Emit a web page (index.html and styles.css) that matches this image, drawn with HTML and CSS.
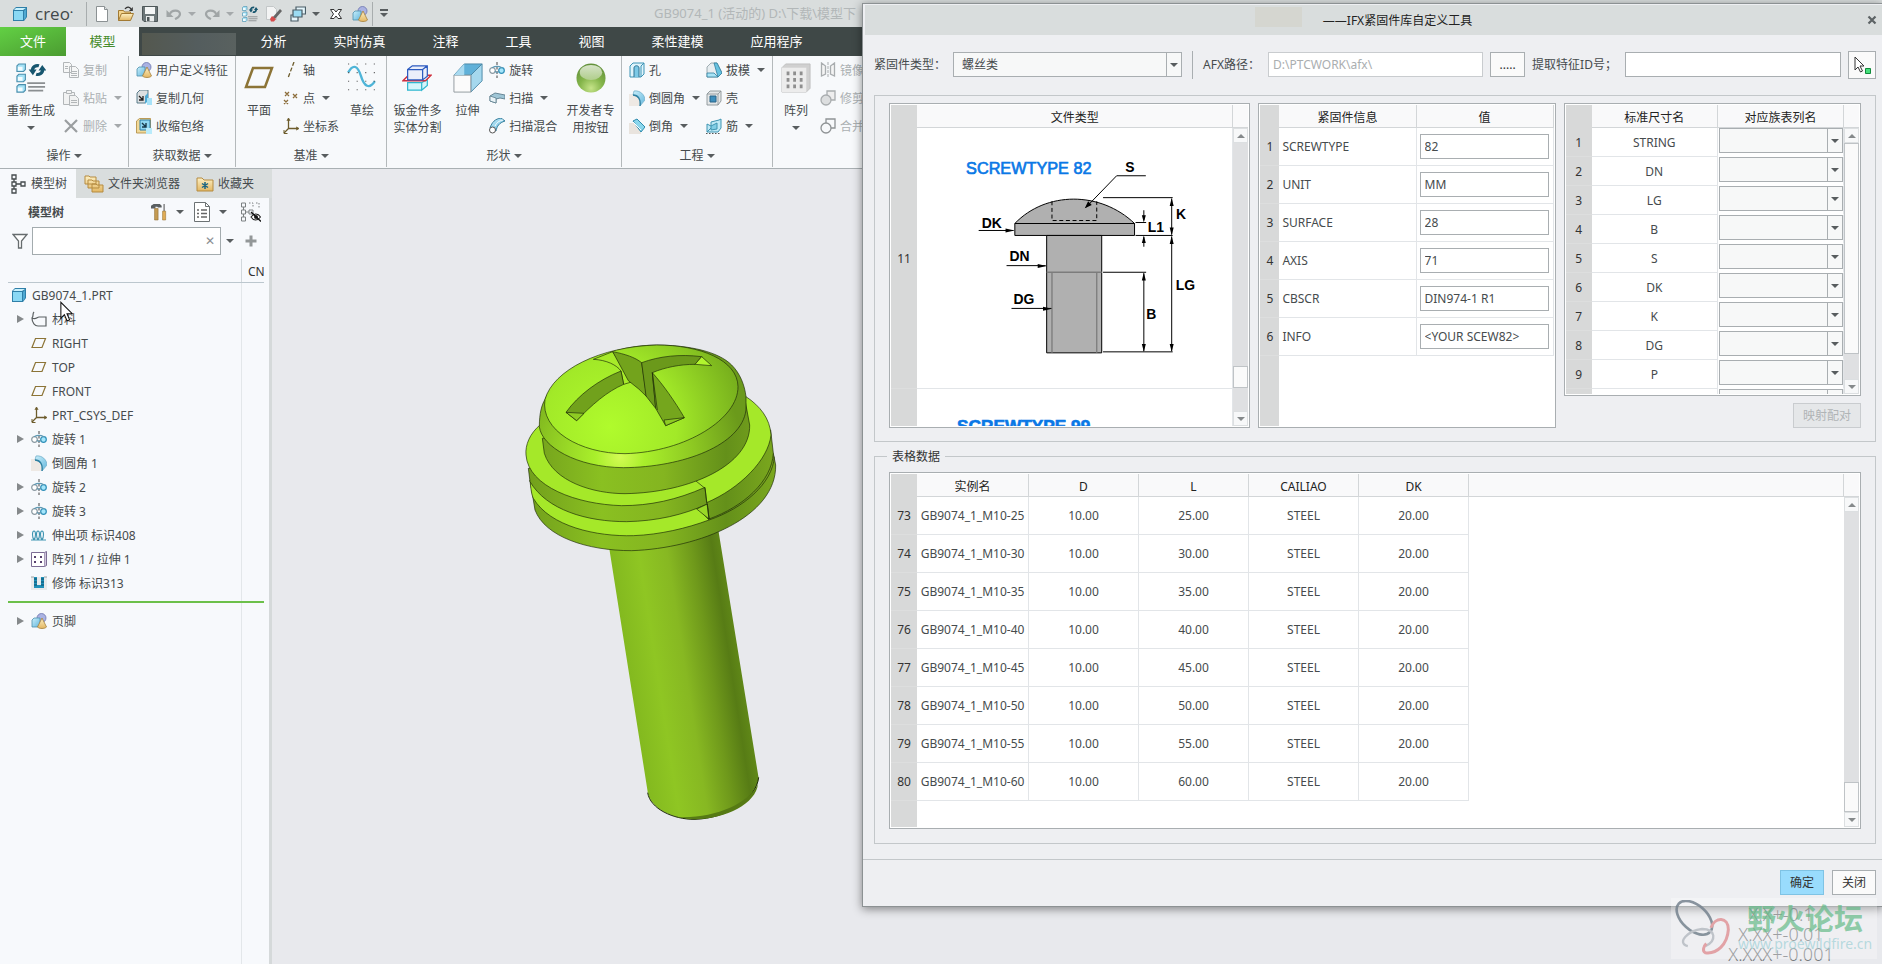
FILE: index.html
```html
<!DOCTYPE html>
<html lang="zh-CN">
<head>
    <meta charset="UTF-8">
    <meta name="viewport" content="width=device-width, initial-scale=1.0">
    <title>GB9074_1 - Creo</title>
    <link rel="stylesheet" href="styles.css">
</head>
<body>
    <!-- 图标库 -->
    <svg class="icon-defs" aria-hidden="true">
        <defs>
            <linearGradient id="g-blue" x1="0" y1="0" x2="1" y2="1"><stop offset="0" stop-color="#c9effb"/><stop offset="1" stop-color="#63b6dc"/></linearGradient>
            <linearGradient id="g-gold" x1="0" y1="0" x2="0" y2="1"><stop offset="0" stop-color="#fdf0c4"/><stop offset="1" stop-color="#e3b763"/></linearGradient>
            <radialGradient id="g-ball" cx=".5" cy=".85" r=".8"><stop offset="0" stop-color="#c6e489"/><stop offset=".5" stop-color="#84b54a"/><stop offset="1" stop-color="#64923c"/></radialGradient>
            <linearGradient id="g-gloss" x1="0" y1="0" x2="0" y2="1"><stop offset="0" stop-color="#f3f8ec"/><stop offset="1" stop-color="#b9d29b"/></linearGradient>
        </defs>
        <symbol id="i-cube" viewBox="0 0 16 16"><path d="M1 4l3-3h11v10l-3 4H1z" fill="#2f7fa8"/><path d="M2 5h9v9H2z" fill="#8ad8f4"/><path d="M2 4l2-2h10l-3 2z" fill="#c9f1fd"/><path d="M12 5l2-2v8l-2 3z" fill="#4fa9d2"/></symbol>
        <symbol id="i-new" viewBox="0 0 16 16"><path d="M2.500.5h8l3 3v12h-11z" fill="#fff" stroke="#8b9193"/><path d="M10.500.5v3h3" fill="#dfe3e4" stroke="#8b9193"/></symbol>
        <symbol id="i-open" viewBox="0 0 16 16"><path d="M.5 14.500v-10h5l1 1.500h6v3" fill="#f3d48e" stroke="#a27a33"/><path d="M.5 14.500l3-7h12l-3 7z" fill="url(#g-gold)" stroke="#a27a33"/><path d="M7 3c2-3 5-2 6 0" fill="none" stroke="#333" stroke-width="1.300"/><path d="M14.800 1v4h-4z" fill="#333"/></symbol>
        <symbol id="i-save" viewBox="0 0 16 16"><path d="M.5.5h15v15H2l-1.500-1.500z" fill="#6d7779" stroke="#4e5759"/><path d="M3 1h10v7H3z" fill="#f4f6f6"/><path d="M4 10h8v5.500H4z" fill="#e9ecec"/><path d="M5 11h2.500v4H5z" fill="#4e5759"/></symbol>
        <symbol id="i-undo" viewBox="0 0 16 16"><path d="M4 8c1-4 10-5 10 0 0 3-3 4-5 5" fill="none" stroke="#a0a5a6" stroke-width="2.200"/><path d="M.5 4v7h7z" fill="#a0a5a6"/></symbol>
        <symbol id="i-redo" viewBox="0 0 16 16"><path d="M12 8C11 4 2 3 2 8c0 3 3 4 5 5" fill="none" stroke="#a0a5a6" stroke-width="2.200"/><path d="M15.500 4v7h-7z" fill="#a0a5a6"/></symbol>
        <symbol id="i-regen" viewBox="0 0 32 32"><g fill="#a5e2f6" stroke="#4b8fad" stroke-width="1.200"><path d="M1 3l2-2h7v6l-2 2H1zM1 14l2-2h7v6l-2 2H1zM1 25l2-2h7v6l-2 2H1z"/></g><path d="M2 4h5v4H2zM2 15h5v4H2zM2 26h5v4H2z" fill="#f2fcff"/><path d="M12 21.500h19M13 25.500h18M13 29.500h16" stroke="#8b8f91" stroke-width="1.800"/><path d="M17.500 8c0-4 4-6 7-5M28.500 7c0 4-4 6-7 5" fill="none" stroke="#17566f" stroke-width="3.400"/><path d="M13.500 7h8.500l-4 6zM24 8h8.500l-4.500-6z" fill="#17566f"/></symbol>
        <symbol id="i-erase" viewBox="0 0 16 16"><path d="M.5.5h7l3 3v10h-10z" fill="#f3f4f4" stroke="#c3c7c8"/><path d="M14 3l2 2-7 8-3-1z" fill="#666"/><path d="M6 10l4 3-2 2.500H5L4 13z" fill="#d64b4b"/></symbol>
        <symbol id="i-windows" viewBox="0 0 16 16"><g fill="#e4f5fb" stroke="#4a5d66" stroke-width="1.200"><path d="M6 1h9.500v7H6z"/><path d="M1 9h7v6H1z"/><path d="M3 4h9v7H3z" fill="#9bdcf3"/></g></symbol>
        <symbol id="i-closewin" viewBox="0 0 16 16"><path d="M2.500 3.500h3.500l2 2.500 2-2.500h3.500L10.500 8l3 4.500H10L8 10l-2 2.500H2.500l3-4.500z" fill="#fff" stroke="#333"/></symbol>
        <symbol id="i-udf" viewBox="0 0 16 16"><circle cx="10.500" cy="5" r="4.500" fill="#aab2e2" stroke="#6c75ae" stroke-width=".8"/><path d="M1 7l2-2h6v6l-2 3H1z" fill="url(#g-blue)" stroke="#4b8fad" stroke-width=".8"/><path d="M11 5l4.500 9c-2 2-7 2-9 0z" fill="url(#g-gold)" stroke="#a5803b" stroke-width=".8"/></symbol>
        <symbol id="i-copy" viewBox="0 0 16 16"><g fill="#f6f7f7" stroke="#b2b6b8"><path d="M.5.500h6l2 2v8h-8zM6.500 4.500h6l3 3v8h-9z"/><path d="M8 9.500h6M8 11.500h6M8 13.500h6M2 4.500h3M2 6.500h3"/></g></symbol>
        <symbol id="i-paste" viewBox="0 0 16 16"><g fill="#f1f2f2" stroke="#b2b6b8"><path d="M.5 2.500h11v12H.5z"/><path d="M3.500.500h5v3h-5z"/><path d="M6.500 5.500h6l3 3v7h-9z"/><path d="M8 10.500h6M8 12.500h6"/></g></symbol>
        <symbol id="i-delete" viewBox="0 0 16 16"><path d="M2 2l12 12M14 2L2 14" stroke="#9a9ea0" stroke-width="2.200"/></symbol>
        <symbol id="i-copygeom" viewBox="0 0 16 16"><path d="M1 3l3-3h8v9l-3 4H1z" fill="#dcdfe0" stroke="#4b6f80" stroke-width=".9"/><path d="M3 6l4 4M7 6v4H3" stroke="#222" stroke-width="1.300" fill="none"/><path d="M9 6l3-3v8l-3 3z" fill="#4fa9d2"/><path d="M11 8h5v7h-5z" fill="#a7e2f8"/></symbol>
        <symbol id="i-shrink" viewBox="0 0 16 16"><path d="M.5 3l3-2.500h11v12L12 15H.5z" fill="#f1d998" stroke="#b6924a" stroke-width=".9"/><path d="M4 2h10v10H4z" fill="#8fd6f1" stroke="#2f7fa8"/><path d="M6 5l4 4M10 5v4H6" stroke="#17384a" stroke-width="1.400" fill="none"/><path d="M10 10h6v6h-6z" fill="#b9ebfb"/></symbol>
        <symbol id="i-plane" viewBox="0 0 30 24"><path d="M9 2h19l-7 19H2z" fill="none" stroke="#8c7436" stroke-width="2.500"/></symbol>
        <symbol id="i-axis" viewBox="0 0 16 16"><path d="M11 0L5 16" stroke="#6d5c2c" stroke-width="1.300" stroke-dasharray="4 2"/></symbol>
        <symbol id="i-point" viewBox="0 0 16 16"><path d="M2 2l4 4M6 2L2 6M10 4l4 4M14 4l-4 4M1 10l4 4M5 10l-4 4" stroke="#8c6d3a" stroke-width="1.300"/></symbol>
        <symbol id="i-csys" viewBox="0 0 16 16"><path d="M5.500 1v9.500H15M5.500 10.500L1 15" fill="none" stroke="#6d5c2c" stroke-width="1.300"/><path d="M4 3l1.500-3L7 3M13 9l3 1.500-3 1.500M1 12v3.500h3.500" fill="none" stroke="#6d5c2c"/></symbol>
        <symbol id="i-sketch" viewBox="0 0 28 28"><path d="M1 9C6 0 10 3 13 12c3 10 8 13 13 5" fill="none" stroke="#4fb5d8" stroke-width="2.200"/><path d="M1 1h27M1 9h27M1 17h27M1 25h27" stroke="#555" stroke-width="1" stroke-dasharray="1 7"/></symbol>
        <symbol id="i-sheet" viewBox="0 0 32 28"><path d="M6 19h15v8H6zM21 19l6-4v7l-6 5z" fill="#d6f5fb" stroke="#2fb7cf" stroke-width="1.300"/><path d="M1 17l6-6h24l-6 6z" fill="#fff" stroke="#d02f3c" stroke-width="1.500"/><path d="M6 5l5-4h16v11l-5 4H6zM6 5h16v11M22 5l5-4" fill="#eaeefa" stroke="#2c5bc0" stroke-width="1.300"/></symbol>
        <symbol id="i-extrude" viewBox="0 0 32 32"><path d="M1 13L12 1h19L19 13z" fill="#5fb0d8" stroke="#4a87a5"/><path d="M19 13L31 1v18L19 31z" fill="#a5d8ee" stroke="#4a87a5"/><path d="M1 13h18v18H1z" fill="#fbfbfb" stroke="#8f989c"/><path d="M12 1L1 13h11z" fill="#a9daf0"/></symbol>
        <symbol id="i-revolve" viewBox="0 0 16 16"><path d="M8 0v16" stroke="#444" stroke-dasharray="3 1.500"/><circle cx="3.500" cy="8.500" r="2.800" fill="#fff" stroke="#8b9aa2" stroke-width="1.200"/><circle cx="12.500" cy="8.500" r="2.800" fill="#a5e6fb" stroke="#2f8fb8" stroke-width="1.200"/><path d="M3 5.700c3-1.500 7-1.500 10 0M6 9c1 2 3 2 4 0" fill="none" stroke="#5f99b3" stroke-width="1.200"/></symbol>
        <symbol id="i-sweep" viewBox="0 0 16 16"><path d="M1 6l5-3 10 2v4l-5-1-4 1v4l-6-2z" fill="#9fc6d6" stroke="#5d7e8d" stroke-width=".9"/><path d="M1 6l6 2v5l-6-2z" fill="#e9f3f7" stroke="#5d7e8d" stroke-width=".8"/></symbol>
        <symbol id="i-blend" viewBox="0 0 16 16"><path d="M1 10c2-6 5-9 11-10l4 3c-6 2-8 5-9 10z" fill="url(#g-blue)" stroke="#39809e"/><circle cx="3.500" cy="12" r="3" fill="#fff" stroke="#555"/><path d="M6 8c2-4 4-5 8-6" fill="none" stroke="#fff"/></symbol>
        <symbol id="i-ball" viewBox="0 0 32 32"><circle cx="16" cy="16" r="15.500" fill="url(#g-ball)"/><ellipse cx="16" cy="10" rx="12" ry="8" fill="url(#g-gloss)" opacity=".8"/></symbol>
        <symbol id="i-hole" viewBox="0 0 16 16"><path d="M1 4l3-3h11v11l-3 3H1z" fill="#dff4fb" stroke="#3b93b5"/><path d="M5 15V6c0-3 5-3 5 0v9" fill="#7cc9e6" stroke="#2d7393"/><path d="M12 4v11M12 4l3-3" stroke="#3b93b5"/></symbol>
        <symbol id="i-round" viewBox="0 0 16 16"><path d="M0 4h6c5 1 6 5 6 8l-2 4H0z" fill="#eee9e4"/><path d="M5 1c6-1 11 4 11 9l-5 6c1-5-1-10-7-11z" fill="url(#g-blue)" stroke="#78b3cb" stroke-width=".8"/><path d="M4 5c5 0 8 4 7 11" fill="none" stroke="#2e7fa0" stroke-width="1.300"/></symbol>
        <symbol id="i-chamfer" viewBox="0 0 16 16"><path d="M0 5h6l6 6v5H0z" fill="#e9e4de"/><path d="M4 3l4-2 8 8-4 5z" fill="#8ad6ec" stroke="#2e8aac"/><path d="M4 4l8 8" stroke="#fff"/></symbol>
        <symbol id="i-draft" viewBox="0 0 16 16"><path d="M1 5l4-4h6l5 10-4 4H1z" fill="#e7edf0" stroke="#8a999f" stroke-width=".8"/><path d="M8 1l3 0 5 10-4 4z" fill="#67c2e0" stroke="#2f7fa0" stroke-width=".8"/><path d="M1 11h7l4 4H1z" fill="#a9e4f6" stroke="#2f7fa0" stroke-width=".8"/></symbol>
        <symbol id="i-shell" viewBox="0 0 16 16"><path d="M1 4l3-3h11v10l-3 4H1z" fill="#e4e7e8" stroke="#8a9396" stroke-width=".9"/><path d="M1 4h11v11M12 4l3-3" fill="none" stroke="#8a9396" stroke-width=".8"/><path d="M4 6h6v6H4z" fill="#3e8fbd" stroke="#2a6588"/></symbol>
        <symbol id="i-rib" viewBox="0 0 16 16"><path d="M1 6l4 2V4l8-2 2-1v9l-3 4H1z" fill="#bfe9f6" stroke="#3f95b2"/><path d="M5 8l6-3v6l-6 1zM1 14l4-4" fill="#80cde5" stroke="#3f95b2"/><path d="M0 15.500h15" stroke="#555" stroke-dasharray="1.500 1.500"/></symbol>
        <symbol id="i-pattern" viewBox="0 0 32 32"><path d="M1 5l4-4h26v26l-4 4H1z" fill="#d0d0d0" stroke="#c0c0c0"/><path d="M1 5h26v26H1z" fill="#ececec"/><g fill="#8f8f8f"><path d="M6 9h3v4H6zM13 9h3v4h-3zM20 9h3v4h-3zM6 16h3v4H6zM13 16h3v4h-3zM20 16h3v4h-3zM6 23h3v4H6zM13 23h3v4h-3zM20 23h3v4h-3z"/></g></symbol>
        <symbol id="i-mirror" viewBox="0 0 16 16"><path d="M1.500 1v13l4-2V4zM14.500 1v13l-4-2V4z" fill="#f4f4f4" stroke="#a9adaf" stroke-width="1.300"/><path d="M8 0v16" stroke="#a9adaf" stroke-dasharray="3 1"/></symbol>
        <symbol id="i-trim" viewBox="0 0 16 16"><path d="M7 1h8v9H7z" fill="#eee" stroke="#a9adaf" stroke-width="1.300"/><circle cx="6" cy="10" r="5" fill="#dcdedf" stroke="#a9adaf" stroke-width="1.300"/></symbol>
        <symbol id="i-merge" viewBox="0 0 16 16"><path d="M6 5V1h9v9h-4" fill="none" stroke="#8f9395" stroke-width="1.300"/><circle cx="6" cy="10" r="5" fill="none" stroke="#8f9395" stroke-width="1.300"/></symbol>
        <symbol id="i-tree" viewBox="0 0 16 20"><g fill="none" stroke="#454b4d" stroke-width="1.300"><path d="M2 1h4v4H2zM2 8h4v4H2zM2 15h4v4H2zM11 8h4v4h-4zM4 5v3M4 12v3M6 10h5"/></g></symbol>
        <symbol id="i-folders" viewBox="0 0 20 20"><g fill="url(#g-gold)" stroke="#b58b41"><path d="M1 10V2h4l1 1h6v7zM4 14V6h4l1 1h6v7zM8 18v-8h4l1 1h6v7z"/></g></symbol>
        <symbol id="i-fav" viewBox="0 0 18 16"><path d="M1 15V2h5l2 2h9v11z" fill="url(#g-gold)" stroke="#b58b41"/><path d="M9 6v7M6 7.500l6 4M12 7.500l-6 4" stroke="#1a6583" stroke-width="1.500"/></symbol>
        <symbol id="i-tools" viewBox="0 0 18 20"><path d="M0 3l3-2h7l2 2v2H8L7 4H5v2H0z" fill="#5a5f61"/><path d="M4 6h4v13H4z" fill="#c59b52" stroke="#8b6a30" stroke-width=".6"/><path d="M14 1h1.500v9H14z" fill="#777"/><path d="M13 9h3.500v10H13z" fill="#e1ad55" stroke="#94702f" stroke-width=".6"/></symbol>
        <symbol id="i-list" viewBox="0 0 16 20"><path d="M.5.5h11l4 4v15H.5z" fill="#fff" stroke="#6c7274"/><path d="M11.500.5v4h4" fill="none" stroke="#6c7274"/><path d="M3 8h2M3 11.500h2M3 15h2M7 8h6M7 11.500h6M7 15h6" stroke="#666" stroke-width="1.300"/></symbol>
        <symbol id="i-treeeye" viewBox="0 0 20 20"><g fill="none" stroke="#7c8183"><path d="M.5 1h4v4h-4zM.5 8h4v4h-4zM.5 15h4v4h-4zM8 8h4v4H8zM2.500 5v3M2.500 12v3M4.500 10H8"/><path d="M8 1h4v4M15 1h3v5" stroke-dasharray="1.500 1.500"/></g><path d="M10 15c3-4 7-4 9.500 0-3 4-7 4-9.500 0z" fill="#fff" stroke="#222" stroke-width="1.100"/><circle cx="15" cy="15" r="2" fill="#222"/><path d="M10 10l10 9.500" stroke="#111" stroke-width="1.300"/></symbol>
        <symbol id="i-funnel" viewBox="0 0 16 16"><path d="M1 1.500h14L9.500 8v7h-3V8z" fill="#fff" stroke="#666c6e" stroke-width="1.300"/></symbol>
        <symbol id="i-plus" viewBox="0 0 12 12"><path d="M6 .5v11M.5 6h11" stroke="#939798" stroke-width="3"/></symbol>
        <symbol id="i-material" viewBox="0 0 16 16"><path d="M3 1C1 3 3 5 1 7c0 5 3 8 6 8h8V6H8c-2 0-3 3-7 1" fill="none" stroke="#5b6062" stroke-width="1.200"/></symbol>
        <symbol id="i-datum" viewBox="0 0 16 16"><path d="M4.500 3.500h10l-3.500 9H1z" fill="none" stroke="#8c7436" stroke-width="1.200"/></symbol>
        <symbol id="i-helix" viewBox="0 0 16 16"><g fill="none" stroke="#3f95b2" stroke-width="1.100"><path d="M0 13h3c2-3 2-9 0-9s-2 6 0 9h4c2-3 2-9 0-9s-2 6 0 9h4c2-3 2-9 0-9s-2 6 0 9h4"/></g></symbol>
        <symbol id="i-parr" viewBox="0 0 16 16"><path d="M.5 1.500h13v14H.5z" fill="#fff" stroke="#7c6c94"/><path d="M13.500 1.500L15.500.5v14l-2 1" fill="#cfc6dc" stroke="#7c6c94"/><path d="M3 5h2v2H3zM9 5h2v2H9zM3 10h2v2H3zM9 10h2v2H9z" fill="#57406f"/></symbol>
        <symbol id="i-thread" viewBox="0 0 16 16"><path d="M0 2h16v13H0z" fill="#e8eaeb"/><path d="M0 2h3M13 2h3" stroke="#9aa3a7"/><path d="M3 2v11h10V2h-3v8H6V2z" fill="#2090b8"/><path d="M3 4h3M3 7h3M3 10h3M10 4h3M10 7h3M10 10h3" stroke="#0b516e"/></symbol>
        <symbol id="i-pointer" viewBox="0 0 16 24"><path d="M1 1v18l4-4 3 7 3-1-3-7h6z" fill="#fff" stroke="#111" stroke-width="1.200"/></symbol>
        <symbol id="i-pick" viewBox="0 0 18 18"><path d="M2 1v13l3-3 2.500 5 2-1L7 10h4z" fill="#fff" stroke="#333"/><path d="M12.500 12.500h5v5h-5z" fill="#45e07b" stroke="#118a3c"/></symbol>
    </svg>

    <div class="app">
        <header class="titlebar">
            <svg class="ic"><use href="#i-cube"/></svg>
            <span class="brand">creo<sup>•</sup></span>
            <div class="quick">
                <button aria-label="新建"><svg class="ic"><use href="#i-new"/></svg></button>
                <button aria-label="打开"><svg class="ic"><use href="#i-open"/></svg></button>
                <button aria-label="保存"><svg class="ic"><use href="#i-save"/></svg></button>
                <button aria-label="撤消" class="off"><svg class="ic"><use href="#i-undo"/></svg><i class="caret"></i></button>
                <button aria-label="重做" class="off"><svg class="ic"><use href="#i-redo"/></svg><i class="caret"></i></button>
                <button aria-label="重新生成"><svg class="ic"><use href="#i-regen"/></svg></button>
                <button aria-label="拭除"><svg class="ic"><use href="#i-erase"/></svg></button>
                <button aria-label="窗口"><svg class="ic"><use href="#i-windows"/></svg><i class="caret"></i></button>
                <button aria-label="关闭窗口"><svg class="ic"><use href="#i-closewin"/></svg></button>
                <button aria-label="用户定义特征"><svg class="ic"><use href="#i-udf"/></svg></button>
            </div>
            <button class="customize" aria-label="自定义"><i class="caret"></i></button>
            <span class="doc-title">GB9074_1 (活动的) D:\下载\模型下</span>
        </header>

        <nav class="tabs">
            <button class="tab file">文件</button>
            <button class="tab active">模型</button>
            <span class="tab-blank"></span>
            <button class="tab">分析</button>
            <button class="tab wide">实时仿真</button>
            <button class="tab">注释</button>
            <button class="tab">工具</button>
            <button class="tab">视图</button>
            <button class="tab wide">柔性建模</button>
            <button class="tab wide">应用程序</button>
        </nav>

        <div class="ribbon">
            <section class="group g-ops">
                <div class="group-body">
                    <button class="big"><svg><use href="#i-regen"/></svg>重新生成<i class="caret"></i></button>
                    <div class="col">
                        <button class="cmd off"><svg class="ic"><use href="#i-copy"/></svg>复制</button>
                        <button class="cmd off"><svg class="ic"><use href="#i-paste"/></svg>粘贴<i class="caret"></i></button>
                        <button class="cmd off"><svg class="ic"><use href="#i-delete"/></svg>删除<i class="caret"></i></button>
                    </div>
                </div>
                <button class="group-title">操作<i class="caret"></i></button>
            </section>
            <section class="group g-data">
                <div class="group-body">
                    <div class="col">
                        <button class="cmd"><svg class="ic"><use href="#i-udf"/></svg>用户定义特征</button>
                        <button class="cmd"><svg class="ic"><use href="#i-copygeom"/></svg>复制几何</button>
                        <button class="cmd"><svg class="ic"><use href="#i-shrink"/></svg>收缩包络</button>
                    </div>
                </div>
                <button class="group-title">获取数据<i class="caret"></i></button>
            </section>
            <section class="group g-datum">
                <div class="group-body">
                    <button class="big"><svg><use href="#i-plane"/></svg>平面</button>
                    <div class="col">
                        <button class="cmd"><svg class="ic"><use href="#i-axis"/></svg>轴</button>
                        <button class="cmd"><svg class="ic"><use href="#i-point"/></svg>点<i class="caret"></i></button>
                        <button class="cmd"><svg class="ic"><use href="#i-csys"/></svg>坐标系</button>
                    </div>
                    <button class="big"><svg><use href="#i-sketch"/></svg>草绘</button>
                </div>
                <button class="group-title">基准<i class="caret"></i></button>
            </section>
            <section class="group g-shape">
                <div class="group-body">
                    <button class="big"><svg><use href="#i-sheet"/></svg>钣金件多<br>实体分割</button>
                    <button class="big narrow"><svg><use href="#i-extrude"/></svg>拉伸</button>
                    <div class="col">
                        <button class="cmd"><svg class="ic"><use href="#i-revolve"/></svg>旋转</button>
                        <button class="cmd"><svg class="ic"><use href="#i-sweep"/></svg>扫描<i class="caret"></i></button>
                        <button class="cmd"><svg class="ic"><use href="#i-blend"/></svg>扫描混合</button>
                    </div>
                    <button class="big"><svg><use href="#i-ball"/></svg>开发者专<br>用按钮</button>
                </div>
                <button class="group-title">形状<i class="caret"></i></button>
            </section>
            <section class="group g-eng">
                <div class="group-body">
                    <div class="col">
                        <button class="cmd"><svg class="ic"><use href="#i-hole"/></svg>孔</button>
                        <button class="cmd"><svg class="ic"><use href="#i-round"/></svg>倒圆角<i class="caret"></i></button>
                        <button class="cmd"><svg class="ic"><use href="#i-chamfer"/></svg>倒角<i class="caret"></i></button>
                    </div>
                    <div class="col">
                        <button class="cmd"><svg class="ic"><use href="#i-draft"/></svg>拔模<i class="caret"></i></button>
                        <button class="cmd"><svg class="ic"><use href="#i-shell"/></svg>壳</button>
                        <button class="cmd"><svg class="ic"><use href="#i-rib"/></svg>筋<i class="caret"></i></button>
                    </div>
                </div>
                <button class="group-title">工程<i class="caret"></i></button>
            </section>
            <section class="group g-edit">
                <div class="group-body">
                    <button class="big narrow"><svg><use href="#i-pattern"/></svg>阵列<i class="caret"></i></button>
                    <div class="col">
                        <button class="cmd off"><svg class="ic"><use href="#i-mirror"/></svg>镜像</button>
                        <button class="cmd off"><svg class="ic"><use href="#i-trim"/></svg>修剪</button>
                        <button class="cmd off"><svg class="ic"><use href="#i-merge"/></svg>合并</button>
                    </div>
                </div>
            </section>
        </div>

        <div class="workspace">
            <aside class="sidebar">
                <div class="side-tabs">
                    <button class="side-tab current"><svg class="ic-tree"><use href="#i-tree"/></svg>模型树</button>
                    <button class="side-tab"><svg class="ic-tree wide"><use href="#i-folders"/></svg>文件夹浏览器</button>
                    <button class="side-tab"><svg class="ic"><use href="#i-fav"/></svg>收藏夹</button>
                </div>
                <div class="side-head">
                    <h2>模型树</h2>
                    <button class="set" aria-label="设置"><svg class="ic-tree"><use href="#i-tools"/></svg><i class="caret"></i></button>
                    <button aria-label="显示"><svg class="ic-tree"><use href="#i-list"/></svg><i class="caret"></i></button>
                    <button aria-label="隐藏"><svg class="ic-tree wide"><use href="#i-treeeye"/></svg></button>
                </div>
                <div class="filter">
                    <svg class="ic"><use href="#i-funnel"/></svg>
                    <div class="filter-box">
                        <input type="text" aria-label="过滤">
                        <button aria-label="清除">✕</button>
                    </div>
                    <i class="caret"></i>
                    <button aria-label="添加"><svg class="ic-plus"><use href="#i-plus"/></svg></button>
                </div>
                <div class="tree-head"><span></span><span class="tree-cn">CN</span></div>
                <div class="tree">
                    <ul>
                        <li class="root"><svg class="ic"><use href="#i-cube"/></svg>GB9074_1.PRT</li>
                        <li class="has"><svg class="ic"><use href="#i-material"/></svg>材料</li>
                        <li><svg class="ic"><use href="#i-datum"/></svg>RIGHT</li>
                        <li><svg class="ic"><use href="#i-datum"/></svg>TOP</li>
                        <li><svg class="ic"><use href="#i-datum"/></svg>FRONT</li>
                        <li><svg class="ic"><use href="#i-csys"/></svg>PRT_CSYS_DEF</li>
                        <li class="has"><svg class="ic"><use href="#i-revolve"/></svg>旋转 1</li>
                        <li><svg class="ic"><use href="#i-round"/></svg>倒圆角 1</li>
                        <li class="has"><svg class="ic"><use href="#i-revolve"/></svg>旋转 2</li>
                        <li class="has"><svg class="ic"><use href="#i-revolve"/></svg>旋转 3</li>
                        <li class="has"><svg class="ic"><use href="#i-helix"/></svg>伸出项 标识408</li>
                        <li class="has"><svg class="ic"><use href="#i-parr"/></svg>阵列 1 / 拉伸 1</li>
                        <li><svg class="ic"><use href="#i-thread"/></svg>修饰 标识313</li>
                    </ul>
                    <hr>
                    <ul>
                        <li class="has"><svg class="ic"><use href="#i-udf"/></svg>页脚</li>
                    </ul>
                </div>
                <svg class="pointer"><use href="#i-pointer"/></svg>
            </aside>

            <main class="canvas">
                <!-- 螺钉模型 -->
                <svg class="screw" viewBox="0 0 870 1500" role="img" aria-label="GB9074_1 螺钉">
                    <defs>
                        <linearGradient id="s-shaft" gradientUnits="userSpaceOnUse" x1="355" y1="1020" x2="690" y2="968">
                            <stop offset="0" stop-color="#83b91f"/><stop offset=".25" stop-color="#8fc623"/><stop offset=".5" stop-color="#87b822"/><stop offset=".72" stop-color="#6f991b"/><stop offset=".9" stop-color="#577c15"/><stop offset="1" stop-color="#618918"/>
                        </linearGradient>
                        <linearGradient id="s-side" gradientUnits="userSpaceOnUse" x1="50" y1="0" x2="798" y2="0">
                            <stop offset="0" stop-color="#729f1c"/><stop offset=".3" stop-color="#8ac021"/><stop offset=".55" stop-color="#84b520"/><stop offset=".8" stop-color="#64901a"/><stop offset="1" stop-color="#7ba81e"/>
                        </linearGradient>
                        <radialGradient id="s-dome" gradientUnits="userSpaceOnUse" cx="300" cy="290" r="400">
                            <stop offset="0" stop-color="#b0fb2c"/><stop offset=".5" stop-color="#a2e928"/><stop offset="1" stop-color="#78b01d"/>
                        </radialGradient>
                        <radialGradient id="s-rim" gradientUnits="userSpaceOnUse" cx="330" cy="380" r="370">
                            <stop offset="0" stop-color="#d3fb54"/><stop offset=".2" stop-color="#a9ef2b"/><stop offset=".6" stop-color="#8dc822"/><stop offset="1" stop-color="#6b9a1b"/>
                        </radialGradient>
                    </defs>
                    <g stroke="#1d2a08" stroke-width="2" stroke-linejoin="round">
                        <path d="M297 650L413 1385C420 1435 490 1468 555 1468C650 1465 738 1410 746 1345L625 600Z" fill="url(#s-shaft)" stroke="none"/>
                        <path d="M413 1388C420 1436 490 1469 555 1468C650 1465 738 1410 746 1342" fill="none" stroke-width="3"/>
                        <path d="M490 1460C600 1470 715 1425 744 1362C738 1420 650 1466 555 1468Z" fill="#567a14" stroke="none"/>
                        <path d="M60 450L75 540C105 620 230 662 365 662C570 655 800 560 797 405L790 370Z" fill="url(#s-side)"/>
                        <path d="M60 450C62 475 65 495 70 505C120 590 260 620 370 617C450 614 530 595 597 570L560 530L340 560Z" fill="#a5e829"/>
                        <path d="M55 415L60 455C110 540 230 575 350 575C440 573 520 555 592 522L597 567C700 530 785 455 790 370L782 300Z" fill="url(#s-side)"/>
                        <path d="M597 570C700 535 788 460 793 380" fill="none"/>
                        <path d="M560 537L597 567L592 522Z" fill="#99d927"/>
                        <path d="M48 375C45 345 60 310 90 285L708 200C750 228 780 265 783 315C775 390 690 475 590 518L585 472C500 510 420 527 335 527C200 523 55 470 48 375Z" fill="#a5e829"/>
                        <path d="M558 453L585 475L597 567" fill="none"/>
                        <path d="M97 325L103 370C130 455 250 491 345 491C540 488 722 405 719 285L706 215Z" fill="url(#s-side)"/>
                        <path d="M88 290C88 250 95 225 105 208C125 160 180 115 250 88C320 55 380 46 440 45C540 46 625 65 665 105C690 130 704 165 708 200L708 240C695 345 520 412 340 413C200 412 95 350 88 290Z" fill="url(#s-rim)"/>
                        <path d="M105 208C90 300 210 371 345 371C530 366 685 265 684 170C683 90 570 45 440 45C270 50 130 120 105 208Z" fill="url(#s-dome)"/>
                        <path d="M250 88C290 90 320 105 333 123L341 163L368 155L308 65Z" fill="#a7eb29"/>
                        <path d="M168 247C205 195 265 150 333 123L341 163C290 185 245 225 200 272Z" fill="#71a11c"/>
                        <path d="M168 247L222 250L200 272Z" fill="#8ecb23"/>
                        <path d="M308 65C345 72 375 82 395 98L410 200Q390 178 355 152Z" fill="#73a31c"/>
                        <path d="M395 98C450 78 510 72 575 80L555 103C510 103 465 112 427 128L437 235L408 198Z" fill="#6b991b"/>
                        <path d="M575 80L605 107L555 103Z" fill="#b1f52e"/>
                        <path d="M427 128C460 165 495 215 523 263L467 287L437 235Z" fill="#75a61d"/>
                        <path d="M462 270L523 263L467 287Z" fill="#8ecb23"/>
                        <path d="M427 128L442 240" fill="none"/>
                    </g>
                </svg>
                <div class="tolerance">
                    <span>X.X+-0.1</span>
                    <span>X.XX+-0.01</span>
                    <span>X.XXX+-0.001</span>
                </div>
            </main>
        </div>

        <div class="dialog" role="dialog" aria-labelledby="dlg-title">
            <div class="dlg-bar">
                <span class="dlg-blank"></span>
                <h1 id="dlg-title">——IFX紧固件库自定义工具</h1>
                <button class="dlg-close" aria-label="关闭窗口"><svg viewBox="0 0 10 10"><path d="M1.500 1.500l7 7M8.500 1.500l-7 7" stroke="#5d6365" stroke-width="2.200"/></svg></button>
            </div>
            <div class="dlg-form">
                <label for="kind">紧固件类型：</label>
                <span class="combo kind"><select id="kind"><option>螺丝类</option></select></span>
                <span class="rule"></span>
                <label for="afx">AFX路径：</label>
                <input id="afx" class="afx" type="text" value="D:\PTCWORK\afx\" disabled>
                <button class="btn dots">.....</button>
                <label for="fid">提取特征ID号；</label>
                <input id="fid" class="fid" type="text">
                <button class="btn pick" aria-label="选取"><svg><use href="#i-pick"/></svg></button>
            </div>

            <div class="box top-box">
                <div class="grid-frame">
                    <div class="grid-view">
                        <table class="t-type">
                            <thead><tr><th class="no"></th><th>文件类型</th></tr></thead>
                            <tbody>
                                <tr>
                                    <td class="no">11</td>
                                    <td class="pic">
                                        <svg viewBox="111 84 951 780" role="img" aria-label="SCREWTYPE 82">
                                            <text class="d-title" x="259" y="222">SCREWTYPE 82</text>
                                            <path d="M406 370C500 272 665 272 767 370Z" fill="#b0b0b0" stroke="#000" stroke-width="3"/>
                                            <path d="M406 370h361v36H406z" fill="#b0b0b0" stroke="#000" stroke-width="3"/>
                                            <path d="M502 406h166v354H502z" fill="#b0b0b0" stroke="#000" stroke-width="3"/>
                                            <path d="M502 517h166M518 760V519M653 760V519" fill="none" stroke="#7c7c7c" stroke-width="4"/>
                                            <path d="M518 303v58h135v-58" fill="none" stroke="#000" stroke-width="3" stroke-dasharray="12 8"/>
                                            <path d="M801 226h-88L620 322M672 292h210M770 367h32M770 406h112M672 517h130M672 757h210M879 295v108M879 409v346M795 330v30M795 410v30M795 520v235M297 391h105M381 497h118M396 626h120" fill="none" stroke="#000" stroke-width="3"/>
                                            <path d="M617 324l10-21 11 11zM879 293l-6 24h12zM879 406l-6-24h12zM879 408l-6 24h12zM879 757l-6-24h12zM795 518l-6 24h12zM795 757l-6-24h12zM795 367l-6-22h12zM795 407l-6 22h12zM405 391l-27-6v12zM502 498l-27-6v12zM518 627l-27-6v12z"/>
                                            <g class="d-label">
                                                <text x="739" y="215">S</text><text x="306" y="384">DK</text><text x="807" y="396">L1</text>
                                                <text x="892" y="357">K</text><text x="390" y="483">DN</text><text x="402" y="612">DG</text>
                                                <text x="802" y="657">B</text><text x="891" y="570">LG</text>
                                            </g>
                                        </svg>
                                    </td>
                                </tr>
                                <tr>
                                    <td class="no"></td>
                                    <td class="pic next"><svg viewBox="111 867 951 780" role="img" aria-label="SCREWTYPE 99"><text class="d-title heavy" x="232" y="994">SCREWTYPE 99</text></svg></td>
                                </tr>
                            </tbody>
                        </table>
                    </div>
                    <div class="scroll"><b></b><button aria-label="向上"><i class="caret up"></i></button><div class="track"><span class="thumb at-type"></span></div><button aria-label="向下"><i class="caret"></i></button></div>
                </div>

                <div class="grid-frame">
                    <div class="grid-view">
                        <table class="t-info">
                            <thead><tr><th class="no"></th><th>紧固件信息</th><th>值</th></tr></thead>
                            <tbody>
                                <tr><td class="no">1</td><td><label for="v1">SCREWTYPE</label></td><td><input id="v1" type="text" value="82"></td></tr>
                                <tr><td class="no">2</td><td><label for="v2">UNIT</label></td><td><input id="v2" type="text" value="MM"></td></tr>
                                <tr><td class="no">3</td><td><label for="v3">SURFACE</label></td><td><input id="v3" type="text" value="28"></td></tr>
                                <tr><td class="no">4</td><td><label for="v4">AXIS</label></td><td><input id="v4" type="text" value="71"></td></tr>
                                <tr><td class="no">5</td><td><label for="v5">CBSCR</label></td><td><input id="v5" type="text" value="DIN974-1 R1"></td></tr>
                                <tr><td class="no">6</td><td><label for="v6">INFO</label></td><td><input id="v6" type="text" value="&lt;YOUR SCEW82&gt;"></td></tr>
                            </tbody>
                        </table>
                    </div>
                </div>

                <div class="map-col">
                    <div class="grid-frame">
                        <div class="grid-view">
                            <table class="t-map">
                                <thead><tr><th class="no"></th><th>标准尺寸名</th><th>对应族表列名</th></tr></thead>
                                <tbody>
                                    <tr><td class="no">1</td><td>STRING</td><td><span class="combo"><select aria-label="STRING"></select></span></td></tr>
                                    <tr><td class="no">2</td><td>DN</td><td><span class="combo"><select aria-label="DN"></select></span></td></tr>
                                    <tr><td class="no">3</td><td>LG</td><td><span class="combo"><select aria-label="LG"></select></span></td></tr>
                                    <tr><td class="no">4</td><td>B</td><td><span class="combo"><select aria-label="B"></select></span></td></tr>
                                    <tr><td class="no">5</td><td>S</td><td><span class="combo"><select aria-label="S"></select></span></td></tr>
                                    <tr><td class="no">6</td><td>DK</td><td><span class="combo"><select aria-label="DK"></select></span></td></tr>
                                    <tr><td class="no">7</td><td>K</td><td><span class="combo"><select aria-label="K"></select></span></td></tr>
                                    <tr><td class="no">8</td><td>DG</td><td><span class="combo"><select aria-label="DG"></select></span></td></tr>
                                    <tr><td class="no">9</td><td>P</td><td><span class="combo"><select aria-label="P"></select></span></td></tr>
                                    <tr><td class="no"></td><td></td><td><span class="combo"><select aria-label="10"></select></span></td></tr>
                                </tbody>
                            </table>
                        </div>
                        <div class="scroll"><b></b><button aria-label="向上"><i class="caret up"></i></button><div class="track"><span class="thumb at-map"></span></div><button aria-label="向下"><i class="caret"></i></button></div>
                    </div>
                    <button class="btn map-btn" disabled>映射配对</button>
                </div>
            </div>

            <fieldset class="box data-box">
                <legend>表格数据</legend>
                <div class="grid-frame">
                    <div class="grid-view">
                        <table class="t-data">
                            <thead><tr><th class="no"></th><th class="name">实例名</th><th>D</th><th>L</th><th>CAILIAO</th><th>DK</th><th class="rest"></th></tr></thead>
                            <tbody>
                                <tr><td class="no">73</td><td>GB9074_1_M10-25</td><td>10.00</td><td>25.00</td><td>STEEL</td><td>20.00</td></tr>
                                <tr><td class="no">74</td><td>GB9074_1_M10-30</td><td>10.00</td><td>30.00</td><td>STEEL</td><td>20.00</td></tr>
                                <tr><td class="no">75</td><td>GB9074_1_M10-35</td><td>10.00</td><td>35.00</td><td>STEEL</td><td>20.00</td></tr>
                                <tr><td class="no">76</td><td>GB9074_1_M10-40</td><td>10.00</td><td>40.00</td><td>STEEL</td><td>20.00</td></tr>
                                <tr><td class="no">77</td><td>GB9074_1_M10-45</td><td>10.00</td><td>45.00</td><td>STEEL</td><td>20.00</td></tr>
                                <tr><td class="no">78</td><td>GB9074_1_M10-50</td><td>10.00</td><td>50.00</td><td>STEEL</td><td>20.00</td></tr>
                                <tr><td class="no">79</td><td>GB9074_1_M10-55</td><td>10.00</td><td>55.00</td><td>STEEL</td><td>20.00</td></tr>
                                <tr><td class="no">80</td><td>GB9074_1_M10-60</td><td>10.00</td><td>60.00</td><td>STEEL</td><td>20.00</td></tr>
                            </tbody>
                        </table>
                    </div>
                    <div class="scroll"><b></b><button aria-label="向上"><i class="caret up"></i></button><div class="track"><span class="thumb at-data"></span></div><button aria-label="向下"><i class="caret"></i></button></div>
                </div>
            </fieldset>

            <div class="dlg-foot">
                <button class="btn ok">确定</button>
                <button class="btn">关闭</button>
            </div>
        </div>

        <!-- 水印 -->
        <div class="watermark">
            <svg viewBox="0 0 170 170" aria-hidden="true">
                <g fill="none">
                    <ellipse cx="62" cy="54" rx="64" ry="38" transform="rotate(42 62 54)" stroke="#76838f" stroke-width="8"/>
                    <path d="M42 140C5 130 45 92 85 88C128 88 130 125 95 140" stroke="#b7bcc3" stroke-width="7"/>
                    <path d="M112 84C125 50 165 50 165 90C162 135 130 165 95 160C85 155 90 140 98 132" stroke="#e09599" stroke-width="9"/>
                </g>
            </svg>
            <div class="wm-text"><strong>野火论坛</strong><span>www.proewildfire.cn</span></div>
        </div>
    </div>
</body>
</html>
```
FILE: styles.css
```css
* {
    box-sizing: border-box;
}
body {
    margin: 0;
    font-family: "Noto Sans", "Noto Sans CJK SC", sans-serif;
    font-size: 12px;
    line-height: 17px;
    color: #464b4d;
    overflow: hidden;
}
button, input, select {
    font: inherit;
    color: inherit;
    margin: 0;
}
button {
    background: none;
    border: none;
    padding: 0;
    white-space: nowrap;
}
svg {
    display: block;
    flex: none;
}
.icon-defs {
    position: absolute;
    width: 0;
    height: 0;
}
.ic {
    width: 16px;
    height: 16px;
}
.caret {
    flex: none;
    border: 4px solid transparent;
    border-top-color: #585d5f;
    border-bottom: none;
}
.caret.up {
    border-top: none;
    border-bottom: 4px solid #85898b;
}
.app {
    position: relative;
    height: 100vh;
    display: flex;
    flex-direction: column;
    overflow: hidden;
}

/* 标题栏 */
.titlebar {
    height: 27px;
    flex: none;
    display: flex;
    align-items: center;
    padding-left: 12px;
    background: #d9dddd;
}
.brand {
    margin-left: 7px;
    width: 51px;
    font-family: "Open Sans", sans-serif;
    font-size: 17px;
    color: #41484a;
}
.brand sup {
    font-size: 8px;
    line-height: 8px;
    vertical-align: 5px;
}
.quick {
    display: flex;
    align-items: center;
    gap: 8px;
    height: 24px;
    padding: 0 4px 0 7px;
    border-left: 1px solid #a8adae;
    border-right: 1px solid #a8adae;
}
.quick button {
    display: flex;
    align-items: center;
    gap: 6px;
}
.customize {
    padding: 6px 7px 3px;
    background: linear-gradient(#585d5f, #585d5f) center 2px / 8px 2px no-repeat;
}
.customize .caret {
    display: block;
}
.doc-title {
    margin-left: 259px;
    font-size: 13px;
    color: #b2b7b8;
    white-space: nowrap;
}

/* 选项卡 */
.tabs {
    height: 29px;
    flex: none;
    display: flex;
    background: #3f4847;
}
.tab {
    width: 73px;
    font-size: 13px;
    color: #fff;
}
.tab.wide {
    width: 99px;
}
.tab.file {
    width: 66px;
    background: linear-gradient(160deg, #62d044, #4b9c31);
}
.tab.active {
    background: #f7f9fb;
    color: #478c2d;
}
.tab-blank {
    width: 94px;
    margin: 6px 1px 1px 3px;
    background: linear-gradient(90deg, #54584f, #545d5e 60%, #59615f);
}

/* 功能区 */
.ribbon {
    height: 113px;
    flex: none;
    display: flex;
    background: #f7f9fb;
    border-bottom: 1px solid #a9b0b3;
}
.group {
    flex: none;
    display: flex;
    flex-direction: column;
    align-items: center;
    margin-bottom: 1px;
    border-right: 1px solid #b4b9bb;
}
.group-body {
    align-self: stretch;
    display: flex;
    height: 85px;
}
.group-title {
    display: flex;
    align-items: center;
    gap: 3px;
    height: 26px;
    padding-top: 3px;
}
.g-ops { width: 129px; }
.g-data { width: 107px; }
.g-datum { width: 151px; }
.g-shape { width: 235px; }
.g-eng { width: 151px; }
.g-edit { width: 129px; border-right: none; }
.big {
    display: flex;
    flex-direction: column;
    align-items: center;
    width: 62px;
    padding-top: 6px;
    line-height: 17px;
}
.big svg {
    width: 30px;
    height: 32px;
    margin-bottom: 8px;
}
.big .caret {
    margin-top: 7px;
}
.big.narrow {
    width: 46px;
}
.g-datum .big {
    width: 46px;
}
.col {
    display: flex;
    flex-direction: column;
}
.cmd {
    height: 28px;
    display: flex;
    align-items: center;
    gap: 4px;
}
.cmd .caret {
    margin-left: 3px;
}
.off {
    color: #abb0b2;
}
.off .caret {
    border-top-color: #a5a9ab;
}
.g-ops .col { padding-left: 1px; }
.g-data .col { padding-left: 7px; }
.g-datum .col { padding-left: 1px; width: 57px; }
.g-shape .col { padding-left: 2px; width: 74px; }
.g-shape .big.narrow { width: 40px; }
.g-eng .col { padding-left: 7px; width: 78px; }
.g-eng .col + .col { padding-left: 6px; width: 72px; }
.g-edit .col { padding-left: 1px; }

/* 模型树 */
.workspace {
    flex: 1;
    display: flex;
    min-height: 0;
}
.sidebar {
    position: relative;
    width: 272px;
    flex: none;
    display: flex;
    flex-direction: column;
    background: #f7f9fc;
    border-right: 3px solid #d5d9da;
}
.side-tabs {
    display: flex;
    height: 29px;
    margin-right: -3px;
    background: #d9dddd;
}
.side-tab {
    display: flex;
    align-items: center;
    gap: 4px;
    padding: 0 8px;
}
.side-tab.current {
    width: 76px;
    gap: 5px;
    padding: 0 0 0 10px;
    background: #f7f9fc;
}
.ic-tree {
    width: 16px;
    height: 20px;
}
.ic-tree.wide {
    width: 20px;
}
.side-tab .ic {
    width: 18px;
}
.side-head {
    display: flex;
    align-items: center;
    height: 28px;
    padding: 0 8px 0 28px;
    gap: 14px;
}
.side-head h2 {
    flex: 1;
    margin: 0;
    font-size: 12px;
    font-weight: 600;
}
.side-head button {
    display: flex;
    align-items: center;
    gap: 9px;
}
.side-head .set {
    margin-right: -4px;
}
.filter {
    display: flex;
    align-items: center;
    gap: 4px;
    height: 29px;
    padding-left: 12px;
}
.filter-box {
    display: flex;
    width: 189px;
    height: 28px;
    background: #fff;
    border: 1px solid #a3abae;
}
.filter-box input {
    flex: 1;
    min-width: 0;
}
.filter-box button {
    width: 20px;
    color: #8b9092;
}
.filter .caret {
    margin: 0 7px 0 1px;
}
.ic-plus {
    width: 12px;
    height: 12px;
}
.tree-head {
    display: flex;
    height: 24px;
    margin: 4px 5px 0 8px;
    border-bottom: 1px solid #bcc7ce;
}
.tree-head span:first-child {
    width: 234px;
    flex: none;
    border-right: 1px solid #d2d8dc;
}
.tree-cn {
    padding: 4px 0 0 6px;
    overflow: hidden;
    color: #333;
}
.tree {
    flex: 1;
    margin: 0 5px 0 8px;
    background: linear-gradient(#e3e7ea, #e3e7ea) 233px 0 / 1px 100% no-repeat;
}
.tree ul {
    list-style: none;
    margin: 0;
    padding: 0;
}
.tree li {
    display: flex;
    align-items: center;
    gap: 5px;
    height: 24px;
    padding-left: 23px;
    white-space: pre;
}
.tree li.root {
    padding-left: 3px;
}
.tree li.has {
    padding-left: 9px;
}
.tree li.has::before {
    content: "";
    margin-right: 2px;
    border: 4px solid transparent;
    border-left: 7px solid #85898b;
    border-right: none;
}
.tree hr {
    height: 2px;
    margin: 6px 0;
    border: none;
    background: #6cc04a;
}
.pointer {
    position: absolute;
    left: 60px;
    top: 132px;
    width: 14px;
    height: 22px;
}

/* 图形区 */
.canvas {
    position: relative;
    flex: 1;
    background: #e8e9ed;
}
.screw {
    position: absolute;
    left: 238px;
    top: 161px;
    width: 290px;
    height: 500px;
}
.tolerance {
    position: absolute;
    right: 43px;
    bottom: 0;
    display: flex;
    flex-direction: column;
    align-items: center;
    width: 116px;
    font-size: 18px;
    font-weight: 300;
    line-height: 20px;
    color: #75787b;
}

/* 对话框 */
.dialog {
    position: absolute;
    left: 862px;
    right: 0;
    top: 3px;
    display: flex;
    flex-direction: column;
    background: #eeeff2;
    border: 1px solid #8c9193;
    border-right: none;
    box-shadow: 0 2px 9px rgba(0, 0, 0, 0.45);
}
.dlg-bar {
    height: 31px;
    display: flex;
    align-items: center;
    background: #d9dddd;
    border-left: 2px solid #eeeff2;
    border-top: 1px solid #eeeff2;
}
.dlg-blank {
    width: 47px;
    height: 20px;
    margin: 0 21px 6px auto;
    background: #d5d6d0;
}
.dlg-bar h1 {
    margin: 0 auto 0 0;
    font-size: 12px;
    font-weight: 400;
    color: #222;
}
.dlg-close {
    width: 20px;
}
.dlg-close svg {
    width: 10px;
    height: 10px;
    margin: auto;
}
.dlg-form {
    display: flex;
    align-items: center;
    height: 60px;
    padding: 0 6px 1px 11px;
}
.dlg-form label {
    white-space: nowrap;
}
input[type="text"] {
    height: 25px;
    padding: 0 4px;
    background: #fff;
    border: 1px solid #a9aeb1;
    border-radius: 0;
}
.filter-box input[type="text"] {
    height: auto;
    border: none;
}
.combo {
    position: relative;
    display: block;
}
.combo select {
    display: block;
    width: 100%;
    height: 25px;
    padding: 0 20px 0 8px;
    appearance: none;
    background: linear-gradient(#a9aeb1, #a9aeb1) right 14px top / 1px 100% no-repeat #f7f8f8;
    border: 1px solid #a9aeb1;
    border-radius: 0;
}
.combo::after {
    content: "";
    position: absolute;
    right: 4px;
    top: 11px;
    border: 4px solid transparent;
    border-top-color: #585d5f;
    border-bottom: none;
}
.combo.kind {
    flex: 1 1 229px;
    margin-left: 7px;
}
.rule {
    width: 1px;
    height: 28px;
    margin: 0 10px;
    background: #a9aeb1;
}
.dlg-form .afx {
    flex: 1 1 215px;
    min-width: 0;
    margin: 0 7px 0 8px;
    border-color: #c9cccf;
    color: #aaaeb0;
}
.dlg-form .fid {
    flex: 1 1 216px;
    min-width: 0;
    margin: 0 7px 0 8px;
}
.btn {
    width: 44px;
    height: 25px;
    background: #fafafa;
    border: 1px solid #a9aeb1;
    color: #333;
}
.btn.dots {
    width: 35px;
    margin-right: 7px;
}
.btn.pick {
    width: 28px;
    height: 28px;
    display: flex;
    align-items: center;
    justify-content: center;
}
.btn.pick svg {
    width: 18px;
    height: 18px;
}
.btn.ok {
    background: #99dcfd;
    border-color: #7fc3e4;
}
.box {
    margin: 0 6px 0 11px;
    border: 1px solid #c3c7ca;
}
.top-box {
    display: grid;
    grid-template-columns: 361fr 297fr 297fr;
    gap: 8px;
    padding: 7px 14px 13px;
}
.grid-frame {
    display: flex;
    min-width: 0;
    padding: 1px;
    background: #fff;
    border: 1px solid #a9aeb1;
}
.top-box > .grid-frame {
    height: 325px;
}
.grid-view {
    flex: 1;
    min-width: 0;
    overflow: hidden;
    background: #fff;
}
table {
    width: 100%;
    table-layout: fixed;
    border-collapse: separate;
    border-spacing: 0;
}
th {
    height: 23px;
    padding: 2px 0 0;
    font-weight: 400;
    color: #222;
    background: #f9f9fa;
    border-right: 1px solid #d3d6d8;
    border-bottom: 1px solid #d3d6d8;
}
td {
    padding: 0;
    text-align: center;
    border-right: 1px solid #e2e5e8;
    border-bottom: 1px solid #e2e5e8;
}
.no {
    color: #333;
    background: #d8d9d9;
    border-right: none;
    border-bottom-color: #dddede;
}
th.no {
    border-bottom-color: #d8d9d9;
}
.t-type .no { width: 26px; }
.t-info .no { width: 19px; }
.t-map .no { width: 26px; }
.t-data .no { width: 26px; }

/* 行号列延伸到表格底部 */
.grid-view:has(.t-type), .grid-view:has(.t-map), .grid-view:has(.t-data) {
    background: linear-gradient(#d8d9d9, #d8d9d9) 0 0 / 26px 100% no-repeat #fff;
}
.grid-view:has(.t-info) {
    background: linear-gradient(#d8d9d9, #d8d9d9) 0 0 / 19px 100% no-repeat #fff;
}
.pic {
    height: 261px;
}
.pic svg {
    width: 100%;
    height: 260px;
}
.d-title {
    font-family: "Liberation Sans", Arial, sans-serif;
    font-size: 49px;
    fill: #0a78e6;
    stroke: #0a78e6;
    stroke-width: 2px;
}
.d-title.heavy {
    font-size: 52px;
    font-weight: 700;
}
.d-label {
    font-family: "Liberation Sans", Arial, sans-serif;
    font-size: 42px;
    font-weight: 700;
}
.t-info td {
    height: 38px;
    text-align: left;
    padding-left: 3px;
}
.t-info td.no {
    padding-left: 0;
    text-align: center;
}
.t-info input[type="text"] {
    display: block;
    width: calc(100% - 4px);
}
.t-map td {
    height: 29px;
    vertical-align: top;
    padding-top: 6px;
}
.t-map td:last-child {
    padding-top: 0;
    border-bottom-color: #fff;
}
.t-map td .combo {
    margin: 0 0 0 1px;
}
.map-col {
    display: flex;
    flex-direction: column;
    align-items: flex-end;
    gap: 7px;
}
.map-col .grid-frame {
    width: 100%;
    height: 293px;
}
.map-btn {
    width: 68px;
    color: #b0b4b6;
    background: #e5e7e9;
    border-color: #c9cccf;
}
.scroll {
    width: 15px;
    flex: none;
    display: flex;
    flex-direction: column;
}
.scroll b {
    height: 23px;
    background: #f9f9fa;
    border-bottom: 1px solid #d3d6d8;
}
.scroll button {
    height: 15px;
    display: flex;
    align-items: center;
    justify-content: center;
    background: #f7f8f9;
    border: 1px solid #dcdfe1;
}
.scroll .caret {
    border-top-color: #85898b;
}
.scroll .caret.up {
    border-top: none;
}
.track {
    flex: 1;
    display: flex;
    flex-direction: column;
    background: #dfe0e2;
}
.thumb {
    background: #fafafa;
    border: 1px solid #bfc3c6;
}
.at-type { height: 22px; margin: auto 0 23px; }
.at-map { flex: 1; margin-bottom: 25px; }
.at-data { height: 30px; margin-top: auto; }

.data-box {
    min-width: 0;
    margin-top: 6px;
    padding: 7px 14px 14px;
}
.data-box legend {
    margin-left: -2px;
    padding: 0 5px;
    color: #333;
}
.data-box .grid-frame {
    height: 357px;
}
.t-data td {
    height: 38px;
    white-space: nowrap;
}
.t-data th {
    width: 110px;
}
.t-data th.no {
    width: 26px;
}
.t-data th.name {
    width: 112px;
}
.t-data th.rest {
    width: auto;
}
.dlg-foot {
    display: flex;
    justify-content: flex-end;
    gap: 8px;
    height: 47px;
    margin-top: 15px;
    padding: 10px 6px 0;
    border-top: 1px solid #c3c7ca;
}

/* 水印 */
.watermark {
    position: absolute;
    right: 5px;
    bottom: 5px;
    display: flex;
    width: 206px;
    height: 61px;
    padding: 2px 3px;
    background: rgba(255, 255, 255, 0.3);
}
.watermark svg {
    width: 56px;
    height: 56px;
    opacity: 0.85;
}
.wm-text {
    display: flex;
    flex-direction: column;
    align-items: center;
    padding-left: 8px;
}
.wm-text strong {
    font-family: "Noto Sans CJK SC", sans-serif;
    font-size: 29px;
    line-height: 34px;
    font-weight: 700;
    color: rgba(98, 186, 134, 0.7);
}
.wm-text span {
    font-size: 14px;
    line-height: 20px;
    color: rgba(150, 205, 210, 0.65);
}
```
